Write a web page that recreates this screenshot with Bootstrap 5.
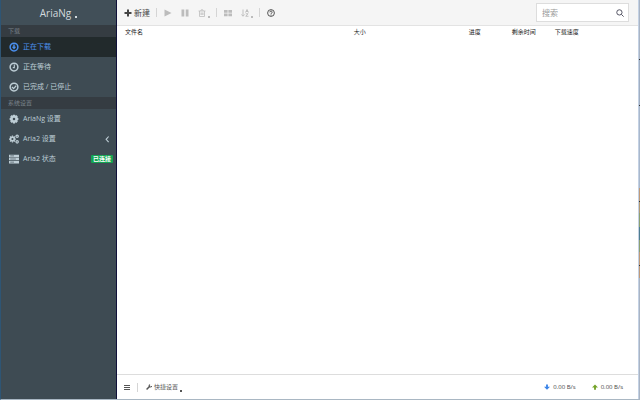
<!DOCTYPE html>
<html lang="zh-CN">
<head>
<meta charset="utf-8">
<meta name="viewport" content="width=device-width, initial-scale=1">
<title>AriaNg</title>
<link href="https://cdn.jsdelivr.net/npm/bootstrap@5.3.0/dist/css/bootstrap.min.css" rel="stylesheet">
<style>
body{font:7px/10px "Open Sans","Noto Sans CJK SC",sans-serif;color:#333}
.app{border-left:1px solid #2e5574;border-bottom:1px solid #a9b7c3}
.edge{width:2px;border-left:1px solid #c3d1e4;background:linear-gradient(#a9b4c4 0 59px,#333 59px 60px,#a0aec2 60px 105px,#333 105px 106px,#a9b8cc 106px 188px,#c09a78 188px 201px,#333 201px 202px,#b39a74 202px 213px,#8da070 213px 227px,#4f7d90 227px 240px,#8da070 240px 252px,#c09a78 252px 265px,#333 265px 266px,#c09a78 266px 278px,#a9b4c4 278px)}
.sidebar{width:116px;background:#3e4b53;border-right:1px solid #10113a;color:#c4cdd2}
.brand{height:25px;font-size:10px;line-height:14px;color:#d3dade;background:#414f58;border:0}
.section-title{height:12px;padding-left:7px;font-size:6px;line-height:12px;color:#79828a;background:#353c42;margin:0;font-weight:400}
.side-link{height:20px;padding:0 3px 0 8px;gap:4px;color:#bdcdd5;text-decoration:none}
.side-link svg{width:10px;height:10px}
.side-link.active{color:#4b90ee;background:#222a2c}
.state{font-size:6px;line-height:8px;padding:0 2px;background:#13a452;color:#fff;border-radius:1px;font-weight:700}
.caret{width:2px;height:2px;background:currentColor;align-self:flex-end;margin-bottom:2px}
.brand .caret{margin-bottom:7px}
.toolbar{height:26px;background:#f5f5f5;border-bottom:1px solid #e3e3e3;padding:0 9px 0 7px}
.tools{gap:6px}
.tool{border:0;background:none;padding:0;height:14px;gap:2px;color:#444}
.tool:disabled{color:#bcbcbc}
.tool + .tool{margin-left:3px}
.tool svg{width:8px;height:8px}
.tool.create{font-size:8px}
.divider{width:1px;height:9px;background:#d5d5d5;margin-right:1px}
.search{width:93px;height:19px;background:#fff;border:1px solid #ddd;padding:0 4px 0 5px}
.search input{border:0;outline:0;background:none;padding:0;font-size:8px;color:#333;min-width:0}
.search input::placeholder{color:#999}
.search button{border:0;background:none;padding:0;color:#445}
.search svg{width:8px;height:8px}
.task-area{padding-left:8px}
.task-head{table-layout:fixed;font-size:6px;line-height:12px;color:#222}
.task-head th{padding:0;font-weight:400}
.w-name{width:44.6%}.w-size{width:22.4%}.w-part{width:8.4%}
.status{height:25px;border-top:1px solid #ddd;padding:0 15px 0 7px}
.status .tools{gap:7px}
.status .tool{font-size:6px;gap:2px;color:#555}
.status .tool svg,.speed svg{width:6px;height:6px}
.speed{gap:3px;font-size:6px;color:#444}
</style>
<script src="https://cdn.jsdelivr.net/npm/bootstrap@5.3.0/dist/js/bootstrap.bundle.min.js"></script>
</head>
<body>
<div class="app d-flex vh-100 bg-white">
<aside class="sidebar flex-shrink-0">
<button class="brand w-100 d-flex align-items-center justify-content-center p-0"><span>AriaNg</span><span class="caret ms-1"></span></button>
<nav>
<h2 class="section-title">下载</h2>
<a class="side-link active d-flex align-items-center" href="#downloading"><svg viewBox="0 0 16 16" fill="none" stroke="currentColor" stroke-width="2.400"><circle cx="8" cy="8" r="6.200"/><path d="M8 3.800v4"/><path d="M4.500 7.500h7L8 12z" fill="currentColor" stroke="none"/></svg>正在下载</a>
<a class="side-link d-flex align-items-center" href="#waiting"><svg viewBox="0 0 16 16" fill="none" stroke="currentColor" stroke-width="2.400"><circle cx="8" cy="8" r="6.200"/><path d="M8.500 4v5H6" stroke-width="1.800"/></svg>正在等待</a>
<a class="side-link d-flex align-items-center" href="#stopped"><svg viewBox="0 0 16 16" fill="none" stroke="currentColor" stroke-width="2.400"><circle cx="8" cy="8" r="6.200"/><path d="M4.600 7.800l2.700 2.700L11.500 6" stroke-width="2"/></svg>已完成 / 已停止</a>
<h2 class="section-title">系统设置</h2>
<a class="side-link d-flex align-items-center" href="#ariang"><svg viewBox="0 0 16 16" fill="none" stroke="currentColor"><circle cx="8" cy="8" r="4" stroke-width="4"/><path d="M8 1v2.500M8 12.500V15M1 8h2.500M12.500 8H15M3 3l1.700 1.700M11.300 11.300L13 13M3 13l1.700-1.700M11.300 4.700L13 3" stroke-width="3.400"/></svg>AriaNg 设置</a>
<a class="side-link d-flex align-items-center" href="#aria2"><svg viewBox="0 0 16 16" fill="none" stroke="currentColor"><circle cx="5.500" cy="8" r="3" stroke-width="2.600"/><path d="M5.500 2.500v2M5.500 11.500v2M0 8h2M9 8h2M1.600 4.100l1.500 1.500M7.900 10.400l1.500 1.500M1.600 11.900l1.500-1.500M7.900 5.600l1.500-1.500" stroke-width="2"/><circle cx="13" cy="3.500" r="1.900" stroke-width="2"/><circle cx="13" cy="12.500" r="1.900" stroke-width="2"/></svg><span class="flex-grow-1">Aria2 设置</span><svg viewBox="0 0 16 16" fill="none" stroke="currentColor" stroke-width="1.800"><path d="M9 4L5 8.500l4 4.500"/></svg></a>
<a class="side-link d-flex align-items-center" href="#status"><svg viewBox="0 0 16 16" fill="currentColor"><path d="M0 1h16v4H0zM0 6h16v4H0zM0 11h16v4H0z"/><path d="M2 3h6M2 8h9M2 13h6" stroke="#3e4b53"/></svg><span class="flex-grow-1">Aria2 状态</span><span class="state">已连接</span></a>
</nav>
</aside>
<main class="d-flex flex-column flex-grow-1">
<header class="toolbar d-flex align-items-center">
<div class="tools d-flex align-items-center flex-grow-1">
<button class="tool create d-flex align-items-center"><svg viewBox="0 0 16 16" fill="none" stroke="currentColor" stroke-width="4"><path d="M8 1v14M1 8h14"/></svg>新建</button>
<span class="divider"></span>
<button class="tool d-flex align-items-center" disabled aria-label="开始"><svg viewBox="0 0 16 16" fill="currentColor"><path d="M1 1l14 7-14 7z"/></svg></button>
<button class="tool d-flex align-items-center" disabled aria-label="暂停"><svg viewBox="0 0 16 16" fill="currentColor"><path d="M1 1h5.500v14H1zM9.500 1H15v14H9.500z"/></svg></button>
<button class="tool d-flex align-items-center" disabled aria-label="删除"><svg viewBox="0 0 16 16" fill="none" stroke="currentColor" stroke-width="1.600"><path d="M1 4h14M5.500 4l1-2.500h3l1 2.500M3 4v11h10V4M6 7v5M8 7v5M10 7v5"/></svg><span class="caret"></span></button>
<span class="divider"></span>
<button class="tool d-flex align-items-center" disabled aria-label="全选"><svg viewBox="0 0 16 16" fill="currentColor"><path d="M0 2h7.200v5.500H0zM8.800 2H16v5.500H8.800zM0 9h7.200v5.500H0zM8.800 9H16v5.500H8.800z"/></svg></button>
<button class="tool d-flex align-items-center" disabled aria-label="排序"><svg viewBox="0 0 16 16" fill="none" stroke="currentColor" stroke-width="1.800"><path d="M4 1v13M1 11l3 3.500L7 11M9 7l3-6 3 6M10 5h4M9.500 9.500H14l-4.500 5H15"/></svg><span class="caret"></span></button>
<span class="divider"></span>
<button class="tool d-flex align-items-center" aria-label="帮助"><svg viewBox="0 0 16 16" fill="none" stroke="currentColor" stroke-width="1.800"><circle cx="8" cy="8" r="6.800"/><path d="M5.500 6.500C5.500 3.500 10.500 3.500 10.500 6.300 10.500 8 8 8 8 9.800M8 11v2"/></svg></button>
</div>
<form class="search d-flex align-items-center"><input class="flex-grow-1" type="text" placeholder="搜索" aria-label="搜索"><button type="button" class="d-flex" aria-label="搜索"><svg viewBox="0 0 16 16" fill="none" stroke="currentColor" stroke-width="1.800"><circle cx="6.800" cy="6.800" r="5.300"/><path d="M10.800 10.800l4.500 4.500"/></svg></button></form>
</header>
<section class="task-area flex-grow-1">
<table class="task-head w-100"><thead><tr><th class="w-name" scope="col">文件名</th><th class="w-size" scope="col">大小</th><th class="w-part" scope="col">进度</th><th class="w-part" scope="col">剩余时间</th><th scope="col">下载速度</th></tr></thead></table>
</section>
<footer class="status d-flex align-items-center justify-content-between">
<div class="tools d-flex align-items-center">
<button class="tool d-flex align-items-center" aria-label="菜单"><svg viewBox="0 0 6 6" fill="currentColor"><path d="M0 1h6v1H0zM0 3h6v1H0zM0 5h6v1H0z"/></svg></button>
<span class="divider"></span>
<button class="tool d-flex align-items-center"><svg viewBox="0 0 16 16" fill="none" stroke="currentColor" stroke-width="4"><path d="M1.500 14.500L10 6"/><path d="M11 2C7 3 8 8 11 8s4-1 4-3" stroke-width="3"/></svg>快捷设置<span class="caret"></span></button>
</div>
<div class="d-flex align-items-center gap-3">
<span class="speed d-flex align-items-center"><svg viewBox="0 0 16 16" fill="#3b84e8"><path d="M5.500 1h5v6H16l-8 8-8-8h5.500z"/></svg>0.00 B/s</span>
<span class="speed d-flex align-items-center"><svg viewBox="0 0 16 16" fill="#74a329"><path d="M5.500 15h5V9H16L8 1 0 9h5.500z"/></svg>0.00 B/s</span>
</div>
</footer>
</main>
<div class="edge flex-shrink-0"></div>
</div>
</body>
</html>
